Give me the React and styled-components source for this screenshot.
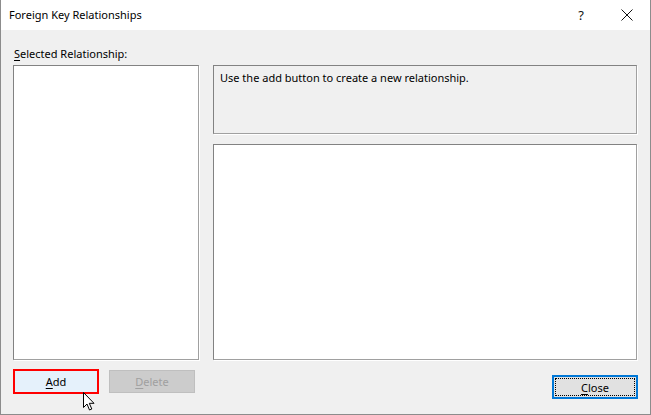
import styled, { createGlobalStyle } from 'styled-components';

const Global = createGlobalStyle`
  html, body {
    margin: 0;
    padding: 0;
    background: #ffffff;
  }
  body {
    font-family: "Segoe UI", "Noto Sans", "Liberation Sans", sans-serif;
    font-size: 11px;
    color: #000;
  }
`

const Window = styled.div`
  position: relative;
  width: 651px;
  height: 415px;
  box-sizing: border-box;
  border: 1px solid #8c8c8c;
  border-top: none;
  background: #f0f0f0;
  display: flex;
  flex-direction: column;
  overflow: hidden;
`

const TitleBar = styled.div`
  height: 30px;
  flex: none;
  background: #ffffff;
  display: flex;
  align-items: center;
  padding-left: 8px;
  padding-bottom: 1px;
  box-sizing: border-box;
`

const Title = styled.div`
  flex: 1;
  font-size: 11px;
`

const TitleButton = styled.div`
  width: 46px;
  height: 30px;
  display: flex;
  align-items: center;
  justify-content: center;
  font-size: 13px;
  color: #111;
`

const Body = styled.div`
  flex: 1;
  padding: 16px 12px 0 12px;
  display: flex;
  flex-direction: column;
`

const Label = styled.div`
  height: 19px;
  line-height: 15px;
  padding-left: 1px;
`

const Key = styled.span`
  text-decoration: underline;
  text-underline-offset: 2px;
`

const Columns = styled.div`
  display: flex;
  gap: 14px;
`

const LeftCol = styled.div`
  width: 186px;
  display: flex;
  flex-direction: column;
`

const RightCol = styled.div`
  flex: 1;
  display: flex;
  flex-direction: column;
  gap: 10px;
  padding-right: 1px;
`

const Box = styled.div`
  box-sizing: border-box;
  height: ${({ h }) => h}px;
  border: 1px solid #828282;
  border-right-color: #a0a0a0;
  border-bottom-color: #a0a0a0;
  box-shadow: 1px 1px 0 #ffffff;
  background: ${({ fill }) => fill || '#ffffff'};
  padding: 4px 6px;
`

const ButtonRow = styled.div`
  display: flex;
  align-items: center;
  gap: 10px;
  margin-top: 9px;
`

const Button = styled.div`
  box-sizing: border-box;
  width: 86px;
  height: ${({ h }) => h}px;
  display: flex;
  align-items: center;
  justify-content: center;
  font-size: 11px;
  border: ${({ variant }) =>
    variant === 'hot' ? '2px solid #ff0000' :
    variant === 'focus' ? '2px solid #0078d7' :
    '1px solid #bfbfbf'};
  background: ${({ variant }) =>
    variant === 'hot' ? '#e5f1fb' :
    variant === 'disabled' ? '#cccccc' :
    '#e1e1e1'};
  color: ${({ variant }) => variant === 'disabled' ? '#a0a0a0' : '#000'};
  ${({ variant }) => variant === 'focus' && `
    outline: 1px dotted #000;
    outline-offset: -4px;
  `}
`

const CloseWrap = styled.div`
  align-self: flex-end;
  margin-top: 5px;
  margin-right: -1px;
`

const Cursor = styled.svg`
  position: absolute;
  left: 82px;
  top: 392px;
`

export default function App() {
  return (
    <>
      <Global />
      <Window>
        <TitleBar>
          <Title>Foreign Key Relationships</Title>
          <TitleButton>?</TitleButton>
          <TitleButton>
            <svg width="12" height="12" viewBox="0 0 12 12">
              <path d="M0.5 0.5 L11.5 11.5 M11.5 0.5 L0.5 11.5" stroke="#111" strokeWidth="1" />
            </svg>
          </TitleButton>
        </TitleBar>
        <Body>
          <Label><Key>S</Key>elected Relationship:</Label>
          <Columns>
            <LeftCol>
              <Box h={295} />
              <ButtonRow>
                <Button variant="hot" h={25}><span><Key>A</Key>dd</span></Button>
                <Button variant="disabled" h={23}><span><Key>D</Key>elete</span></Button>
              </ButtonRow>
            </LeftCol>
            <RightCol>
              <Box h={69} fill="#f0f0f0">Use the add button to create a new relationship.</Box>
              <Box h={216} />
              <CloseWrap>
                <Button variant="focus" h={24}><span><Key>C</Key>lose</span></Button>
              </CloseWrap>
            </RightCol>
          </Columns>
        </Body>
        <Cursor width="13" height="20" viewBox="0 0 13 20">
          <path d="M0.5 0.5 L0.5 15.5 L4 12 L6.5 18 L8.8 17 L6.3 11.3 L11 11.3 Z" fill="#fff" stroke="#000" strokeWidth="1" strokeLinejoin="miter" />
        </Cursor>
      </Window>
    </>
  );
}
